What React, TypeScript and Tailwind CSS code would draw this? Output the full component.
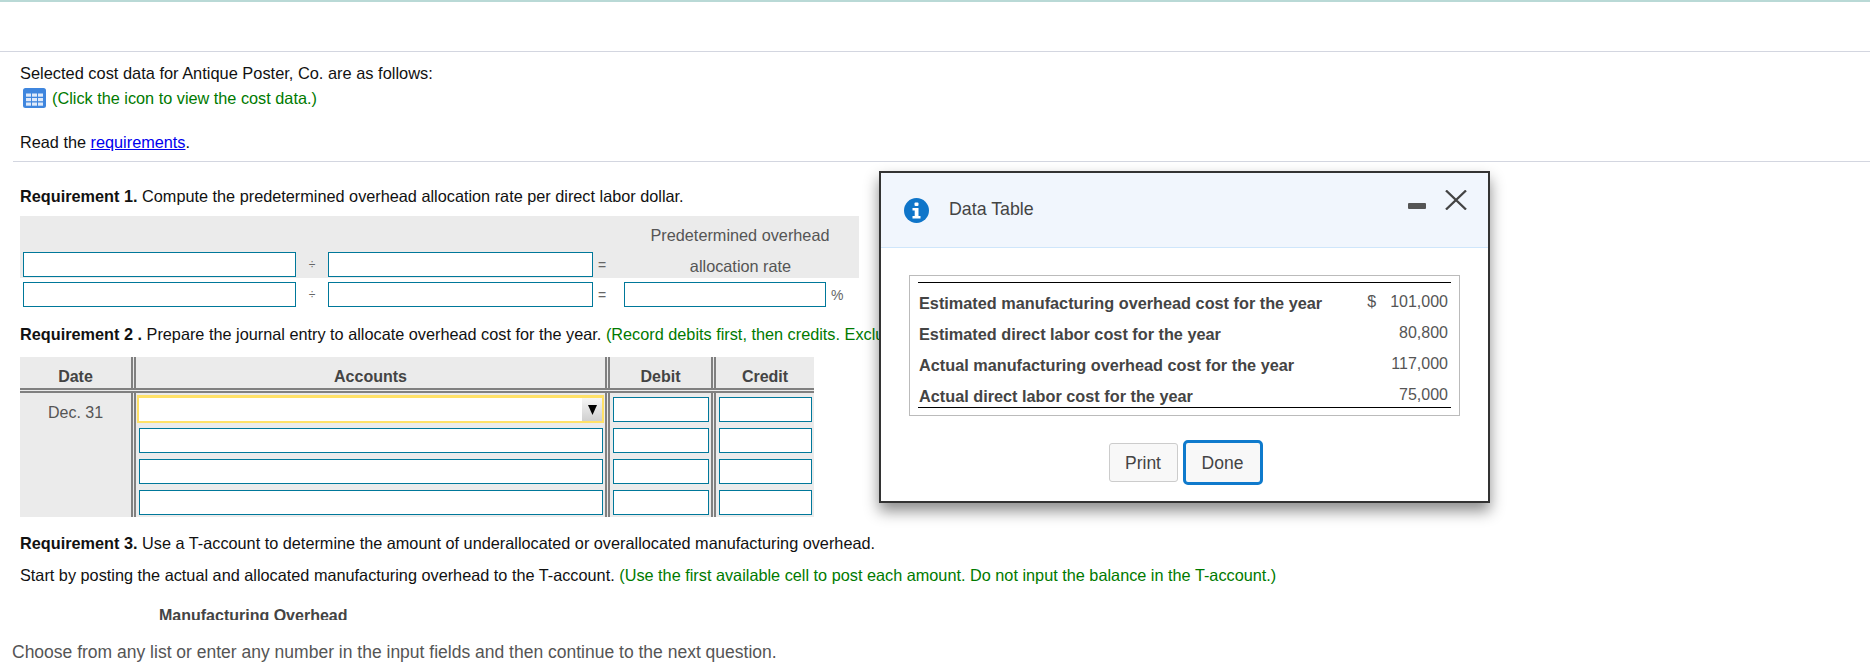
const inputCls = "block h-[25px] bg-white border border-[#00789a] outline-none";

function GridIcon() {
  return (
    <svg width="23" height="20" viewBox="0 0 23 20" className="shrink-0">
      <rect x="0" y="0" width="23" height="20" rx="2.5" fill="#3f86de" />
      {[5.5, 10, 14.5].map((y) =>
        [3, 9, 15].map((x) => (
          <rect key={`${x}-${y}`} x={x} y={y} width="5" height="3.2" fill="#dfeafa" />
        ))
      )}
    </svg>
  );
}

function InfoIcon() {
  return (
    <svg width="25" height="25" viewBox="0 0 25 25" className="shrink-0">
      <circle cx="12.5" cy="12.5" r="12.5" fill="#0f75c9" />
      <rect x="10.5" y="4.5" width="4" height="3.5" rx="1" fill="#fff" />
      <path d="M8.5 10h6v8h2v2.5h-8V18h2.2v-5.5H8.5z" fill="#fff" />
    </svg>
  );
}

function CloseIcon() {
  return (
    <svg width="22" height="20" viewBox="0 0 22 20" fill="none" stroke="#444" strokeWidth="2.3" className="shrink-0">
      <path d="M1 0.5 21 19.5M21 0.5 1 19.5" />
    </svg>
  );
}

function FormulaRow({ last }: { last: React.ReactNode }) {
  return (
    <div className="flex items-center pl-[3px]">
      <input className={`${inputCls} w-[273px]`} />
      <span className="w-[32px] text-center text-[12px] text-[#666]">÷</span>
      <input className={`${inputCls} w-[265px]`} />
      <span className="w-[31px] pl-[5px] text-[14px] text-[#666]">=</span>
      {last}
    </div>
  );
}

function AccountSelect() {
  return (
    <div className="h-[25px]">
      <div className="-ml-[2px] -mt-[2px] flex h-[28px] w-[467px] justify-end border-x-2 border-b-2 border-t-[3px] border-[#ffe168] bg-white">
        <div className="flex h-[23px] w-[20px] items-center justify-center bg-gradient-to-b from-[#f6f6f6] to-[#cfcfcf]">
          <svg width="9" height="10" viewBox="0 0 9 10">
            <polygon points="0,0 9,0 4.5,10" fill="#000" />
          </svg>
        </div>
      </div>
    </div>
  );
}

const rows = [
  { label: "Estimated manufacturing overhead cost for the year", value: "101,000", dollar: true },
  { label: "Estimated direct labor cost for the year", value: "80,800" },
  { label: "Actual manufacturing overhead cost for the year", value: "117,000" },
  { label: "Actual direct labor cost for the year", value: "75,000" },
];

export default function App() {
  return (
    <div className="relative flex h-[663px] w-[1870px] flex-col overflow-hidden bg-white font-['Liberation_Sans',Arial,sans-serif] text-[16.27px] leading-[24px] text-[#111]">
      <div className="h-[2px] shrink-0 bg-[#b9d9d6]" />
      <div className="h-[50px] shrink-0 border-b border-[#d3d6e0]" />

      {/* Question body */}
      <div className="h-[568px] shrink-0 overflow-hidden">
        <div className="pl-[20px] pt-[9px] text-[16.4px]">Selected cost data for Antique Poster, Co. are as follows:</div>
        <div className="mt-[1px] flex items-center gap-[6px] pl-[23px] text-[#007a00]">
          <GridIcon />
          <span>(Click the icon to view the cost data.)</span>
        </div>
        <div className="mt-[20px] pl-[20px]">
          Read the <a className="text-[#0000ee] underline">requirements</a>.
        </div>
        <div className="ml-[13px] mt-[7px] border-t border-[#d3d6e0]" />

        <div className="px-[20px]">
          <p className="mt-[22px]">
            <b>Requirement 1.</b> Compute the predetermined overhead allocation rate per direct labor dollar.
          </p>
          <div className="mt-[8px] h-[62px] w-[839px] bg-[#ebebeb]">
            <div className="flex h-[35px] items-start justify-end pt-[7px]">
              <span className="w-[238px] text-center text-[#555]">Predetermined overhead</span>
            </div>
            <FormulaRow
              last={<span className="flex-1 pr-[2px] pt-[3px] text-center text-[#555]">allocation rate</span>}
            />
          </div>
          <div className="mt-[4px] w-[839px]">
            <FormulaRow
              last={
                <>
                  <input className={`${inputCls} w-[202px]`} />
                  <span className="pl-[5px] text-[14px] text-[#666]">%</span>
                </>
              }
            />
          </div>

          <p className="mt-[15px] whitespace-nowrap">
            <b>Requirement 2 .</b> Prepare the journal entry to allocate overhead cost for the year.{" "}
            <span className="text-[#007a00]">(Record debits first, then credits. Exclude explanations from journal entries.)</span>
          </p>

          {/* Journal entry table */}
          <div className="mt-[11px] w-[794px] bg-[#ebebeb] text-[16px] text-[#444]">
            <div className="grid h-[36px] grid-cols-[111px_474px_106px_103px] border-b-[5px] border-double border-[#808080] text-center font-bold">
              <div className="pt-[8px]">Date</div>
              <div className="border-l-[5px] border-double border-[#808080] pt-[8px]">Accounts</div>
              <div className="border-l-[5px] border-double border-[#808080] pt-[8px]">Debit</div>
              <div className="border-l-[5px] border-double border-[#808080] pt-[8px]">Credit</div>
            </div>
            <div className="grid h-[124px] grid-cols-[111px_474px_106px_103px]">
              <div className="pt-[8px] text-center text-[#555]">Dec. 31</div>
              <div className="flex flex-col gap-[6px] border-l-[5px] border-double border-[#808080] pl-[3px] pt-[4px]">
                <AccountSelect />
                {[0, 1, 2].map((i) => (
                  <input key={i} className={`${inputCls} w-[464px]`} />
                ))}
              </div>
              <div className="flex flex-col gap-[6px] border-l-[5px] border-double border-[#808080] pl-[3px] pt-[4px]">
                {[0, 1, 2, 3].map((i) => (
                  <input key={i} className={`${inputCls} w-[96px]`} />
                ))}
              </div>
              <div className="flex flex-col gap-[6px] border-l-[5px] border-double border-[#808080] pl-[3px] pt-[4px]">
                {[0, 1, 2, 3].map((i) => (
                  <input key={i} className={`${inputCls} w-[93px]`} />
                ))}
              </div>
            </div>
          </div>

          <p className="mt-[14px]">
            <b>Requirement 3.</b> Use a T-account to determine the amount of underallocated or overallocated manufacturing overhead.
          </p>
          <p className="mt-[8px] whitespace-nowrap">
            Start by posting the actual and allocated manufacturing overhead to the T-account.{" "}
            <span className="text-[#007a00]">(Use the first available cell to post each amount. Do not input the balance in the T-account.)</span>
          </p>
          <p className="ml-[139px] mt-[17px] text-[16px] font-bold text-[#444]">Manufacturing Overhead</p>
        </div>
      </div>

      <div className="shrink-0 pl-[12px] pt-[20px] text-[17.5px] text-[#555]">
        Choose from any list or enter any number in the input fields and then continue to the next question.
      </div>

      {/* Data table dialog */}
      <div className="absolute left-[879px] top-[171px] flex h-[332px] w-[611px] flex-col border-2 border-[#333] bg-white shadow-[0_8px_14px_rgba(0,0,0,0.45)]">
        <div className="flex h-[75px] items-start border-b border-[#cfe6fb] bg-[#f1f6fd]">
          <div className="ml-[23px] mt-[25px]">
            <InfoIcon />
          </div>
          <div className="ml-[20px] mt-[24px] text-[17.8px] text-[#444]">Data Table</div>
          <div className="ml-auto mt-[30px] h-[6px] w-[18px] rounded-[1px] bg-[#555]" />
          <div className="ml-[19px] mr-[21px] mt-[17px]">
            <CloseIcon />
          </div>
        </div>

        <div className="ml-[28px] mt-[27px] h-[141px] w-[551px] border border-[#bbb] px-[8px] pt-[6px]">
          <div className="border-y border-black">
            {rows.map((r) => (
              <div key={r.label} className="flex h-[31px] items-center justify-between pl-[1px] pr-[3px] pt-[9px] text-[#444]">
                <span className="font-bold">{r.label}</span>
                <span className="-mt-[2px] flex text-[16px] text-[#555]">
                  {r.dollar && <span className="mr-[14px]">$</span>}
                  {r.value}
                </span>
              </div>
            ))}
          </div>
        </div>

        <div className="mt-[24px] flex items-center justify-center gap-[5px] pl-[2px] text-[17.5px] text-[#444]">
          <button className="h-[39px] w-[69px] rounded-[3px] border border-[#ccc] bg-[#f8f8f8]">Print</button>
          <button className="h-[45px] w-[80px] rounded-[5px] border-[3px] border-[#0f7acc] bg-[#f8f8f8]">Done</button>
        </div>
      </div>
    </div>
  );
}
